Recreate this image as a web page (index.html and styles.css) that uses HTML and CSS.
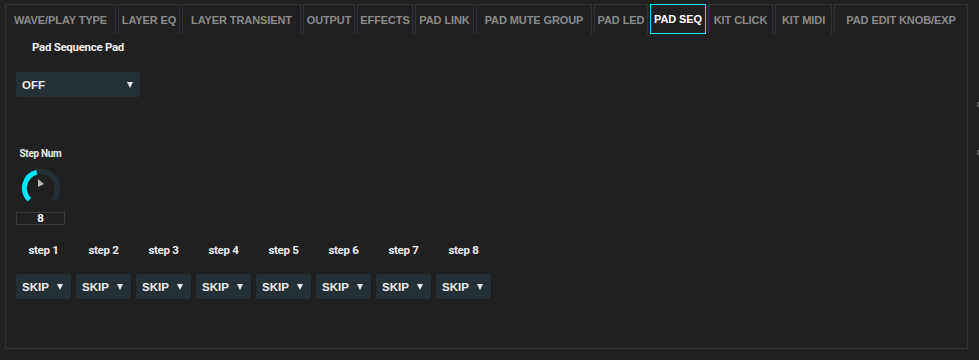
FILE: index.html
```html
<!DOCTYPE html>
<html lang="en">
<head>
    <meta charset="UTF-8">
    <title>Pad Seq</title>
    <link rel="stylesheet" href="styles.css">
</head>
<body>
<div class="editor">
    <div class="tabs">
        <div class="tab w-wave">WAVE/PLAY TYPE</div>
        <div class="tab w-eq">LAYER EQ</div>
        <div class="tab w-transient">LAYER TRANSIENT</div>
        <div class="tab w-output">OUTPUT</div>
        <div class="tab w-effects">EFFECTS</div>
        <div class="tab w-link">PAD LINK</div>
        <div class="tab w-mute">PAD MUTE GROUP</div>
        <div class="tab w-led">PAD LED</div>
        <div class="tab w-seq active">PAD SEQ</div>
        <div class="tab w-click">KIT CLICK</div>
        <div class="tab w-midi">KIT MIDI</div>
        <div class="tab last">PAD EDIT KNOB/EXP</div>
    </div>

    <div class="panel">
        <div class="seq-pad">
            <div class="label">Pad Sequence Pad</div>
            <div class="select wide"><span>OFF</span><i class="caret"></i></div>
        </div>

        <div class="knob-block">
            <div class="label small">Step Num</div>
            <svg class="knob" width="40" height="40" viewBox="0 0 40 40">
                <path d="M8.33 31.67 A16.5 16.5 0 1 1 31.67 31.67" fill="none" stroke="#253036" stroke-width="5"/>
                <path d="M8.33 31.67 A16.5 16.5 0 0 1 15.73 4.06" fill="none" stroke="#00e5ff" stroke-width="5"/>
                <polygon points="17,11 17,19 23,16" fill="#b8b8b8"/>
            </svg>
            <div class="knob-value">8</div>
        </div>

        <div class="steps">
            <div class="step">
                <div class="label">step 1</div>
                <div class="select"><span>SKIP</span><i class="caret"></i></div>
            </div>
            <div class="step">
                <div class="label">step 2</div>
                <div class="select"><span>SKIP</span><i class="caret"></i></div>
            </div>
            <div class="step">
                <div class="label">step 3</div>
                <div class="select"><span>SKIP</span><i class="caret"></i></div>
            </div>
            <div class="step">
                <div class="label">step 4</div>
                <div class="select"><span>SKIP</span><i class="caret"></i></div>
            </div>
            <div class="step">
                <div class="label">step 5</div>
                <div class="select"><span>SKIP</span><i class="caret"></i></div>
            </div>
            <div class="step">
                <div class="label">step 6</div>
                <div class="select"><span>SKIP</span><i class="caret"></i></div>
            </div>
            <div class="step">
                <div class="label">step 7</div>
                <div class="select"><span>SKIP</span><i class="caret"></i></div>
            </div>
            <div class="step">
                <div class="label">step 8</div>
                <div class="select"><span>SKIP</span><i class="caret"></i></div>
            </div>
        </div>
    </div>

    <div class="edge-mark top"></div>
    <div class="edge-mark bottom"></div>
</div>
</body>
</html>
```

FILE: styles.css
```css
:root {
    --bg: #202020;
    --line: #2c333b;
    --select-bg: #253036;
    --tab-text: #8b8b8b;
    --text: #ececec;
    --accent: #00e5ff;
}

* {
    margin: 0;
    padding: 0;
    box-sizing: border-box;
}

body {
    background: var(--bg);
    color: var(--text);
    font-family: "Liberation Sans", Arial, sans-serif;
    width: 979px;
    height: 360px;
    overflow: hidden;
}

.editor {
    position: relative;
    padding: 4px 11px 0 5px;
}

/* tab strip */
.tabs {
    display: flex;
    gap: 2px;
}

.tab {
    flex: none;
    height: 30px;
    border: 1px solid var(--line);
    border-bottom: none;
    color: var(--tab-text);
    font-size: 11px;
    font-weight: bold;
    letter-spacing: -0.1px;
    display: flex;
    align-items: center;
    justify-content: center;
    white-space: nowrap;
}

.w-wave { width: 111px; }
.w-eq { width: 62px; }
.w-transient { width: 119px; }
.w-output { width: 52px; }
.w-effects { width: 56px; }
.w-link { width: 59px; }
.w-mute { width: 116px; }
.w-led { width: 54px; }
.w-seq { width: 56px; }
.w-click { width: 65px; }
.w-midi { width: 57px; }

.tab.active {
    color: #fff;
    border: 1px solid var(--accent);
}

.tab.last {
    flex: 1;
}

/* content panel */
.panel {
    height: 315px;
    border: 1px solid var(--line);
    border-top: none;
    padding: 6px 0 0 10px;
}

.label {
    font-family: Roboto, "Liberation Sans", sans-serif;
    font-weight: bold;
    font-size: 11.5px;
    letter-spacing: -0.3px;
    line-height: 14px;
    color: var(--text);
    text-align: center;
    white-space: nowrap;
}

.label.small {
    font-size: 10px;
    line-height: 13px;
}

.seq-pad {
    width: 124px;
}

.select {
    height: 25px;
    width: 55px;
    background: var(--select-bg);
    border-radius: 3px;
    display: flex;
    align-items: center;
    justify-content: space-between;
    padding: 0 8px 0 6px;
    font-size: 11.5px;
    font-weight: bold;
    color: var(--text);
}

.select.wide {
    width: 124px;
    margin-top: 18px;
    padding-right: 7px;
}

.caret {
    width: 0;
    height: 0;
    border-left: 3.5px solid transparent;
    border-right: 3.5px solid transparent;
    border-top: 6px solid #e6e6e6;
}

/* step count knob */
.knob-block {
    width: 49px;
    margin-top: 50px;
    display: flex;
    flex-direction: column;
    align-items: center;
}

.knob {
    display: block;
    margin-top: 8px;
}

.knob-value {
    width: 49px;
    height: 13px;
    margin-top: 4px;
    border: 1px solid #3a3a3a;
    font-size: 11px;
    font-weight: bold;
    line-height: 11px;
    text-align: center;
    color: #fff;
}

/* step selectors */
.steps {
    display: flex;
    gap: 5px;
    margin-top: 19px;
}

.step {
    width: 55px;
}

.step .label {
    margin-bottom: 17px;
    line-height: 13px;
}

.edge-mark {
    position: absolute;
    right: 0;
    width: 2px;
    height: 5px;
    background: #555;
}

.edge-mark.top { top: 102px; }
.edge-mark.bottom { top: 150px; }
```
